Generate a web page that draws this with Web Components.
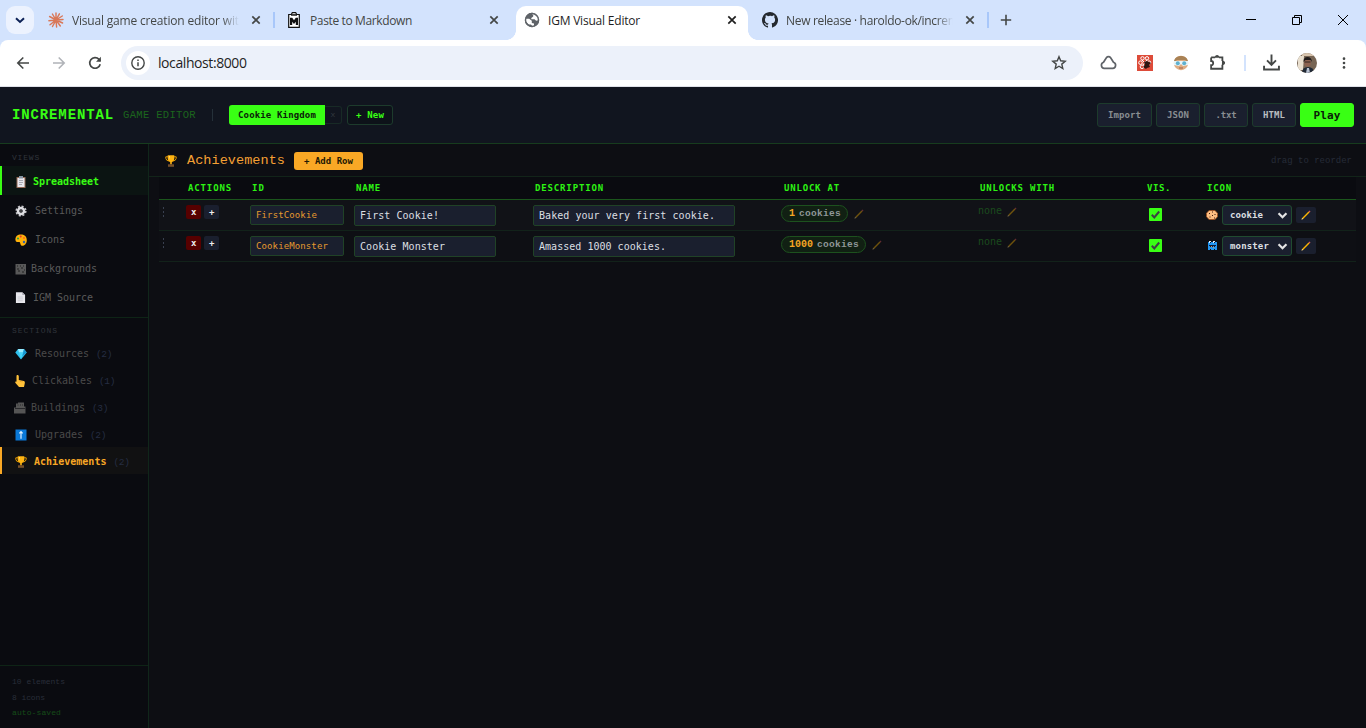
<!DOCTYPE html>
<html lang="en"><head><meta charset="utf-8"><title>IGM Visual Editor</title>
<style>html,body{margin:0;height:728px;overflow:hidden;background:#0d0e13}</style></head>
<body><app-window></app-window>
<script>
const ICONS = {
down:['0 0 16 16','<path d="M4 6.3 8 10l4-3.7" fill="none" stroke="#0b2055" stroke-width="2"/>'],
close:['0 0 16 16','<path d="m4.3 4.3 7.4 7.4m0-7.4-7.4 7.4" stroke="currentColor" stroke-width="1.7"/>'],
burst:['0 0 16 16','<g stroke="#d97757" stroke-width="1.45" stroke-linecap="round"><path d="M8 8V.9M8 8 11.4 1.8M8 8l6.3-4M8 8l7-.5M8 8l6.6 3M8 8l4.3 6M8 8l.6 7M8 8l-3.5 6.5M8 8l-6 4.7M8 8 .9 8.7M8 8 1.6 4.5M8 8 4.4 2"/></g>'],
paste:['0 0 16 16','<path d="M2.7 2.5h2.6l1-1.8h3.4l1 1.8h2.6v12.8H2.7z" fill="#fff" stroke="#111" stroke-width="1.2"/><path d="M5 2.2h6v1.5H5z" fill="#111"/><path d="M4 13V5.8h2.2L8 8.3l1.8-2.5H12V13H9.8V9.8L8 12 6.2 9.8V13z" fill="#111"/>'],
globe:['0 0 16 16','<circle cx="8" cy="8" r="7.2" fill="#5f6368"/><path d="M1.5 6.7h3.7l2.6 2v2.2l2.2.5v2.9l-1.5.3L7 12.5H4.7L1.2 9zM7 1.2 9.2 3v1.5L7.3 6v1.2h3.2l1.6 1.6 2.6-.6C14.5 4.5 12 1.5 8.6 1.1z" fill="#fff"/><circle cx="8" cy="8" r="6.5" fill="none" stroke="#5f6368" stroke-width="1.4"/>'],
github:['0 0 16 16','<path fill="#24292f" d="M8 0C3.58 0 0 3.58 0 8c0 3.54 2.29 6.53 5.47 7.59.4.07.55-.17.55-.38v-1.49c-2.01.37-2.53-.49-2.69-.94-.09-.23-.48-.94-.82-1.13-.28-.15-.68-.52-.01-.53.63-.01 1.08.58 1.23.82.72 1.21 1.87.87 2.33.66.07-.52.28-.87.51-1.07-1.78-.2-3.64-.89-3.64-3.95 0-.87.31-1.59.82-2.15-.08-.2-.36-1.02.08-2.12 0 0 .67-.21 2.2.82A7.7 7.7 0 0 1 8 3.86c.68 0 1.36.09 2 .27 1.53-1.04 2.2-.82 2.2-.82.44 1.1.16 1.92.08 2.12.51.56.82 1.27.82 2.15 0 3.07-1.87 3.75-3.65 3.95.29.25.54.73.54 1.48v2.2c0 .21.15.46.55.38A8 8 0 0 0 8 0z"/>'],
plus:['0 0 16 16','<path d="M8 2.8v10.4M2.8 8h10.4" stroke="#444746" stroke-width="1.6"/>'],
min:['0 0 16 16','<path d="M3 7.5h10" stroke="#000"/>'],
max:['0 0 16 16','<path d="M3.5 5.5h7v7h-7zM5.5 5.5v-2h7v7h-2" fill="none" stroke="#000"/>'],
wclose:['0 0 16 16','<path d="m3 3 10 10m0-10L3 13" stroke="#000"/>'],
back:['0 0 16 16','<path d="M14 8H3m5.3-5.5L2.8 8l5.5 5.5" fill="none" stroke="#444746" stroke-width="1.6"/>'],
fwd:['0 0 16 16','<path d="M2 8h11M7.7 2.5 13.2 8l-5.5 5.5" fill="none" stroke="#b0b3b8" stroke-width="1.6"/>'],
reload:['0 0 16 16','<path d="M13.2 9.2A5.3 5.3 0 1 1 12 4.4l1.3 1.5" fill="none" stroke="#444746" stroke-width="1.7"/><path d="M13.9 1.8v5H9z" fill="#444746"/>'],
info:['0 0 16 16','<circle cx="8" cy="8" r="6.2" fill="none" stroke="#444746" stroke-width="1.4"/><path d="M8 7.2v4M8 4.5V6" stroke="#444746" stroke-width="1.5"/>'],
star:['0 0 16 16','<path d="m8 1.7 1.7 4.1 4.5.4-3.4 2.9 1 4.4L8 11.2l-3.8 2.3 1-4.4-3.4-2.9 4.5-.4z" fill="none" stroke="#444746" stroke-width="1.4"/>'],
cloud:['0 0 16 16','<path d="M4 13.5A3 3 0 0 1 3.3 7.7L6 3.5a2.5 2.5 0 0 1 4 0l2.7 4.2a3 3 0 0 1-.7 5.8z" fill="none" stroke="#5f6368" stroke-width="1.6"/>'],
react:['0 0 16 16','<path d="M0 0h16v16H0z" fill="#dd4b39"/><g fill="none" stroke="#fff" stroke-width="1"><circle cx="5.5" cy="3.3" r="1.7"/><circle cx="10" cy="3.3" r="1.7"/><circle cx="3.5" cy="7.7" r="1.8"/><circle cx="12.2" cy="7.4" r="1.5"/><circle cx="5" cy="11.8" r="1.8"/><path d="m5 5 5 5m0-5-4 5"/></g><path d="m7 7 3-1 4 2-2 2 1 2-3 1-1 1-3-2 2-2z" fill="#2d1512"/>'],
face:['0 0 16 16','<circle cx="8" cy="8" r="7.2" fill="#dfad82"/><path d="M1 7C1-1 15-1 15 7l-3-2H4z" fill="#a98255"/><path d="M1 6h14v4l-5 1-2-2-2 2-5-1z" fill="#e8f5fa"/><circle cx="4.8" cy="8.2" r="2" fill="#5fb1cf"/><circle cx="11.2" cy="8.2" r="2" fill="#5fb1cf"/><path d="M6 13h4" stroke="#a35e46"/>'],
puzzle:['0 0 16 16','<path d="M2 3.2h3.8M9.4 3.2h3.2v3.4M12.600 10v3.9H2v-3.300c2.600 0 2.600-4 0-4V3.200" fill="none" stroke="#444746" stroke-width="1.7"/><path d="M5.300 3.600c0-3.700 4.600-3.700 4.600 0zM12.200 6c3.900 0 3.900 4.600 0 4.600z" fill="#444746"/>'],
download:['0 0 16 16','<path d="M8 .5v9.5M3.8 6 8 10.2 12.2 6M1 11v3.6h14V11" fill="none" stroke="#444746" stroke-width="1.8"/>'],
photo:['0 0 20 20','<defs><clipPath id="p"><circle cx="10" cy="10" r="10"/></clipPath></defs><g clip-path="url(#p)"><path d="M0 0h20v20H0z" fill="#776554"/><path d="M1 3h6l-1 14H1z" fill="#e9dfcf"/><path d="M5 0h12v3H5z" fill="#d8c4ad"/><path d="M5 20q0-6 6-6t6 6" fill="#202936"/><path d="m10 15 2 0 1 5h-4z" fill="#b9c2d2"/><ellipse cx="10.5" cy="9.4" rx="3.300" ry="4.300" fill="#8d6250"/><path d="M6.500 9q0-5 4-5T15 9l-1.500-2h-5z" fill="#211c1b"/><path d="M7.5 9h6" stroke="#332421"/></g>'],
dots:['0 0 16 16','<g fill="#444746"><circle cx="8" cy="3" r="1.5"/><circle cx="8" cy="8" r="1.5"/><circle cx="8" cy="13" r="1.5"/></g>'],
clip:['0 0 12 12','<path d="M1.5 1h9v11h-9z" fill="#916653"/><path d="M2.5 2h7v9h-7z" fill="#e9e8ed"/><path d="M4 0h4v2.5H4z" fill="#8795a2"/><path d="M4 4.5h4M4 6.5h4M4 8.5h3" stroke="#9a9aa5" stroke-width=".8"/>'],
gear:['0 0 12 12','<circle cx="6" cy="6" r="4.8" fill="none" stroke="#c4c4c8" stroke-width="1.6" stroke-dasharray="2.100 1.670"/><circle cx="6" cy="6" r="3" fill="none" stroke="#dedee2" stroke-width="2.5"/><circle cx="6" cy="6" r="1" fill="#555"/>'],
palette:['0 0 12 12','<path d="M6 .5C2 .5 0 3 .5 6.3c.3 2 2.2 1.800 3.500 1.700 1.600-.1 1 2.200 2 3.200 1.700 1.600 5.700-.6 5.800-4.800S9 .5 6 .5z" fill="#ffb10a"/><circle cx="3" cy="4.600" r="1" fill="#14a44d"/><circle cx="5.700" cy="2.600" r="1" fill="#e5382d"/><circle cx="9" cy="4" r="1" fill="#ff6d14"/><circle cx="9" cy="8" r="1.200" fill="#3163a8"/>'],
frame:['0 0 12 12','<path d="M.5 1h10.5v10.5H.5z" fill="#595959"/><path d="M2 3h1m2 0h1m2 0h1M2 6h2m2-1h2m1 2h1M3 8h2m2 1h2" stroke="#222" stroke-width="1"/>'],
page:['0 0 12 12','<path d="M1 .3h7l3 3V12H1z" fill="#e7e7ec"/><path d="M8 .3v3h3" fill="#a8a8b4"/><path d="M3 5.5h5.500m-5.500 2h5.500m-5.500 2h5.500" stroke="#b8b8c0" stroke-width=".6"/>'],
gem:['0 0 12 12','<path d="M3 1h6l2.7 3.5L6 11.5.3 4.5z" fill="#2fc0ec"/><path d="M3 1h6L7.7 4.5H4z" fill="#9aecff"/><path d="M4 4.5h4L6 11z" fill="#47d6fa"/><path d="m9 1 2.7 3.5L7.5 8z" fill="#1996d0"/>'],
hand:['0 0 12 12','<path d="M2.300 0c1.200 0 1.500.7 1.500 1.400V5l5 1c1 .4 1.200 1 1 2.200L9 12H4L.5 8c-.8-1.300.1-2 1-1.300V1.400C1.500.6 1.700 0 2.300 0z" fill="#ffc13a"/><path d="M5.400 5.500V7M7 5.800v1.400" stroke="#d98e1d" stroke-width=".6"/>'],
build:['0 0 12 12','<path d="M2 5.500V1.500h2V.5h6v4h1.500v7H0v-6z" fill="#555"/><path d="M3.500 3h1m1.500 0h1m1 0h1M1 6.500h10" stroke="#1e1e22" stroke-width=".8"/>'],
up:['0 0 12 12','<path d="M.5.5h11v11H.5z" fill="#0a78d6"/><path d="M6 9.7V3M4.3 4.3 6 2.6l1.7 1.7" fill="none" stroke="#dff1ff" stroke-width="1.2"/>'],
trophy:['0 0 12 12','<path d="M3 1.800H.8v1.500Q1 5.600 4 6M9 1.800h2.200v1.500Q11 5.600 8 6" fill="none" stroke="#e59b00" stroke-width="1"/><path d="M2.700 .3h6.600V4Q8.800 6.800 6.800 7.300V9.500H5.200V7.300Q3.200 6.800 2.700 4z" fill="#ffb412"/><path d="M4 1h1v4z" fill="#ffe07a"/><path d="M3 9.300h6v2.500H3z" fill="#75502b"/>'],
pencil:['0 0 12 12','<path d="m1.500 10.500.6-1.600 6.400-6.400 1 1-6.400 6.400z" fill="#fbb400"/><path d="m1.500 10.500.6-1.600 1 1z" fill="#ddd"/><path d="m8.500 2.500 1-1 1 1-1 1z" fill="#e25563"/>'],
check:['0 0 13 13','<rect width="13" height="13" rx="1" fill="#39ff14"/><path d="m2.800 6.800 2.500 2.600L10.200 3.500" fill="none" stroke="#3c4043" stroke-width="2"/>'],
cookie:['0 0 12 12','<path d="M3 1.5h6l2.5 2.7v3.5L9 10.500H3L.5 7.700V4.200z" fill="#fdbd82" stroke="#a34b16" stroke-width=".7"/><path d="M3 4h1v1H3zM6 2.500h1v1H6zM8.500 5h1v1h-1zM6 6h1v1H6zM3.500 7.500h1v1h-1zM8 8.500h1v1H8z" fill="#3f1b10"/>'],
monster:['0 0 12 12','<path d="M2 2h9v8H9V9H8v1H5V9H4v1H2z" fill="#2196f3"/><path d="M3 1h2v2H3zM7 1h2v2H7z" fill="#dceeff"/><path d="M4 2h1v1H4zM8 2h1v1H8zM3 5h7v1H3zM4 6h1v1H4zM6 6h1v1H6zM8 6h1v1H8z" fill="#111b35"/><path d="M5 6h1v1H5zM7 7h1v1H7z" fill="#d99b52"/>'],
chev:['0 0 10 10','<path d="M1.4 3 5 6.6 8.6 3" fill="none" stroke="#e4e4e4" stroke-width="2"/>']
};
const mono = '"DejaVu Sans Mono",monospace', slab = '"Liberation Mono","Courier New",monospace';
function define(name, css, html, after){
  customElements.define(name, class extends HTMLElement{
    connectedCallback(){
      if(this.shadowRoot) return;
      const r=this.attachShadow({mode:'open'});
      r.innerHTML='<style>*{box-sizing:border-box}:host{box-sizing:border-box}'+css+'</style>'+(typeof html==='function'?html(this):html);
      if(after) after(this,r);
    }});
}
const T=(s,w,size,color,extra='')=>`<ui-text w="${w}" style="font-size:${size}px;color:${color};${extra}">${s}</ui-text>`;
const I=(n,s,extra='')=>`<ui-icon name="${n}" size="${s}" style="${extra}"></ui-icon>`;

define('ui-icon',':host{display:block;flex:none}svg{display:block}',e=>{const [v,b]=ICONS[e.getAttribute('name')],s=e.getAttribute('size');return `<svg width="${s}" height="${s}" viewBox="${v}">${b}</svg>`});

define('app-window',':host{display:flex;flex-direction:column;width:1366px;height:728px;overflow:hidden}main{display:flex;flex:1;min-height:0}',
 `<tab-strip></tab-strip><nav-toolbar></nav-toolbar><editor-header></editor-header><main><side-bar></side-bar><sheet-view></sheet-view></main>`);

define('browser-tab',`:host{display:flex;align-items:center;width:232px;height:34px;flex:none;margin-right:6px;padding:0 8px;position:relative;color:#444746;font:12px "Open Sans",sans-serif}
:host([active]){background:#fff;border-radius:10px 10px 0 0;color:#1f1f1f}
:host([active])::before,:host([active])::after{content:"";position:absolute;bottom:0;width:10px;height:10px}
:host([active])::before{left:-10px;background:radial-gradient(circle at 0 0,#d3e3fd 9.6px,#fff 10.2px)}:host([active])::after{right:-10px;background:radial-gradient(circle at 100% 0,#d3e3fd 9.6px,#fff 10.2px)}
:host([sep]) i{position:absolute;right:-3px;top:6px;width:2px;height:16px;background:#a8c7fa}
.l{width:168px;margin:0 8px;overflow:hidden;padding-bottom:4px;height:28px;display:flex;align-items:center}.f{-webkit-mask:linear-gradient(90deg,#000 150px,transparent 167px)}ui-icon{margin-bottom:6px}`,
 e=>`${I(e.getAttribute('icon'),16)}<div class="l ${e.hasAttribute('fade')?'f':''}"><slot></slot></div>${I('close',16)}<i></i>`);

define('tab-strip',`:host{display:flex;height:40px;background:#d3e3fd;padding-top:6px;flex:none}.s{width:28px;height:28px;border-radius:9px;background:#ecf2fe;margin:0 6px;padding:6px;flex:none}.w{display:flex;margin-left:auto;gap:30px;padding:6px 15px 0 0}.p{margin:6px 0 0 6px}`,
`<div class="s">${I('down',16)}</div>
<browser-tab icon="burst" sep fade>${T('Visual game creation editor with',174,12,'inherit')}</browser-tab>
<browser-tab icon="paste">${T('Paste to Markdown',102,12,'inherit')}</browser-tab>
<browser-tab icon="globe" active>${T('IGM Visual Editor',92,12,'inherit')}</browser-tab>
<browser-tab icon="github" sep fade>${T('New release · haroldo-ok/increment',190,12,'inherit')}</browser-tab>
<div class="p">${I('plus',16)}</div><div class="w">${I('min',16)}${I('max',16)}${I('wclose',16)}</div>`);

define('nav-toolbar',`:host{display:block;height:47px;flex:none;background:#d3e3fd}.b{height:47px;background:#fff;border-radius:8px 8px 0 0;border-bottom:1px solid #dfe1e8;display:flex;align-items:center;padding:0 15px 1px}
.o{display:flex;align-items:center;width:962px;height:34px;border-radius:17px;background:#ecf1fa;margin-left:18px;padding:0 16px 0 5px;font-family:"Open Sans",sans-serif}.i{width:24px;height:24px;border-radius:50%;background:#fff;padding:4px;margin-right:8px}.v{width:2px;height:16px;background:#d3e3fd;margin:0 17px 0 18px}`,
`<div class="b">${I('back',16)}${I('fwd',16,'margin-left:20px')}${I('reload',16,'margin-left:20px')}
<div class="o"><div class="i">${I('info',16)}</div>${T('localhost:8000',88.5,14,'#1f1f1f','flex:1;padding-top:2px')}${I('star',16)}</div>
${I('cloud',17,'margin-left:17px')}${I('react',16,'margin-left:20px')}${I('face',16,'margin-left:20px')}${I('puzzle',17,'margin-left:20px')}<div class="v"></div>${I('download',17)}${I('photo',20,'margin-left:17px')}${I('dots',14,'margin-left:20px')}</div>`);

define('game-button',`:host{display:flex;align-items:center;justify-content:center;flex:none;height:24px;border:1px solid #1d3b2c;border-radius:3px;background:#1a1f2e;font-weight:bold}`,'<slot></slot>');

define('editor-header',`:host{display:flex;align-items:center;height:57px;flex:none;background:#11151f;border-bottom:1px solid #173c1e;padding:0 12px;font-family:${slab}}
.d{width:1px;height:12px;background:#253039;margin:0 16px}.k{background:#39ff14;border-radius:3px 0 0 3px;width:96px;height:20px;display:grid;place-items:center;font-family:${mono};font-weight:bold}
.x{width:17px;height:18px;border:1px solid #182a26;border-left:0;border-radius:0 3px 3px 0;display:grid;place-items:center;margin-right:5px}.g{display:flex;gap:4px;margin-left:auto}game-button{font-family:${mono}}`,
`${T('INCREMENTAL',102,14,'#39ff14','font-weight:bold;margin-right:9px;padding-top:1px')}${T('GAME EDITOR',73,10.5,'#1c651d','padding-top:1px')}<div class="d"></div>
<div class="k">${T('Cookie Kingdom',78,9,'#0a2108')}</div><div class="x">${T('x',5,8,'#333a40')}</div>
<game-button style="width:46px;height:20px;background:#0d1219">${T('+ New',28,9,'#39ff14')}</game-button>
<div class="g"><game-button style="width:55px">${T('Import',33,9,'#888d91')}</game-button><game-button style="width:44px">${T('JSON',22,9,'#888d91')}</game-button><game-button style="width:44px">${T('.txt',21,9,'#888d91')}</game-button><game-button style="width:44px">${T('HTML',22,9,'#b9bdc0')}</game-button><game-button style="width:54px;background:#39ff14;border-color:#39ff14">${T('Play',27,11,'#0a1d08','padding-top:1px')}</game-button></div>`);

define('side-item',`:host{display:flex;align-items:center;height:29px;padding:2px 0 0 13px;border-left:2px solid transparent;font-family:${mono};color:#5a5a5a}
:host([small]){height:27px;color:#4a4a4a}:host([active]){background:#0b1412;border-color:#39ff14;color:#39ff14;font-weight:bold}:host([active][small]){background:#111112;border-color:#f9a825;color:#f9a825}
.n{font-weight:normal;margin:2px 0 0 7px;font-family:${slab}}`,
 e=>{const a=n=>e.getAttribute(n);return `${I(a('icon'),a('s')||12)}${T(a('label'),a('w'),10,'inherit',`margin-left:${a('gap')}px`)}${a('n')?`<div class="n">${T('('+a('n')+')',16,9.5,'#252d42')}</div>`:''}`});

define('side-bar',`:host{display:flex;flex-direction:column;width:149px;flex:none;border-right:1px solid #10261a;background:#0a0b10;font-family:${slab}}.h{height:22px;padding:9px 0 0 12px}.l{height:1px;background:#0e2416;margin-top:6px}.f{margin-top:auto;height:63px;border-top:1px solid #0e2416;padding:11px 12px 0;display:grid;grid-template-rows:16px 15px 15px}`,
`<div class="h">${T('VIEWS',28,8,'#30343b')}</div>
<side-item active icon="clip" label="Spreadsheet" w="66" gap="6"></side-item><side-item icon="gear" label="Settings" w="48" gap="8"></side-item><side-item icon="palette" label="Icons" w="30" gap="8"></side-item><side-item icon="frame" label="Backgrounds" w="66" gap="4"></side-item><side-item icon="page" s="11" label="IGM Source" w="60" gap="7"></side-item>
<div class="l"></div><div class="h" style="height:21px;padding-top:8px">${T('SECTIONS',46,8,'#30343b')}</div>
<side-item small icon="gem" label="Resources" w="54" gap="8" n="2"></side-item><side-item small icon="hand" label="Clickables" w="60" gap="5" n="1"></side-item><side-item small icon="build" label="Buildings" w="54" gap="5" n="3" style="padding-left:12px"></side-item><side-item small icon="up" label="Upgrades" w="48" gap="8" n="2"></side-item><side-item small active icon="trophy" label="Achievements" w="72.500" gap="7" n="2"></side-item>
<div class="f">${T('10 elements',53,8,'#292e39')}${T('8 icons',33,8,'#292e39')}${T('auto-saved',49,8,'#154c18')}</div>`);

define('sheet-row',`:host{display:grid;grid-template-columns:27px 64px 104px 179px 248px 197px 163px 65px 1fr;height:31px;border-bottom:1px solid #12221a;background:#111217;font-family:${mono}}
:host([even]){background:#0e0f14}
.c{display:flex;align-items:flex-start;padding-top:5px}
.h{display:grid;gap:2px;padding:2px 0 0 4px}.h i{width:1px;height:2px;background:#394050}
.b{width:15px;height:14px;border-radius:2px;background:#1a1f2e;display:grid;place-items:center;margin-right:3px;font-weight:bold}.r{background:#560000}
.in{height:21px;border:1px solid #204226;border-radius:2px;background:#1a1f2e;display:flex;align-items:center;padding-left:5px}
.p{height:17px;border:1px solid #1d511e;border-radius:9px;background:#112013;display:flex;align-items:center;gap:4px;padding-left:7px;font:bold 10px ${slab}}
.s{width:70px;height:20px;border:1px solid #204b30;border-radius:3px;background:#1a1f2e;display:flex;align-items:center;justify-content:space-between;padding:0 3px 0 7px;font-weight:bold;margin:0 4px}
.e{width:20px;height:16px;border-radius:2px;background:#1a1f2e;display:grid;place-items:center;margin-top:2px}`,
 e=>{const [id,idw,name,nw,desc,dw,n,nnw,pw,icon,iw]=JSON.parse(e.getAttribute('data'));const D='#dcdfe2';return `
<div class="c"><div class="h"><i></i><i></i><i></i></div></div>
<div class="c"><div class="b r">${T('x',5,9,'#eee')}</div><div class="b">${T('+',5,9,'#eee')}</div></div>
<div class="c"><div class="in" style="width:94px;height:20px">${T(id,idw,9,'#e59a2e')}</div></div>
<div class="c"><div class="in" style="width:142px">${T(name,nw,10,D,'padding-top:1px')}</div></div>
<div class="c"><div class="in" style="width:202px">${T(desc,dw,10,D,'padding-top:1px')}</div></div>
<div class="c"><div class="p" style="width:${pw}px">${T(n,nnw,10,'#f5a623')}${T('cookies',42,9.5,'#8f9797')}</div>${I('pencil',12,'opacity:.4;margin:3px 0 0 5px')}</div>
<div class="c" style="font-family:${slab};font-style:italic">${T('none',24,10,'#1b4a1d')}${I('pencil',12,'opacity:.4;margin:1px 0 0 4px')}</div>
<div class="c" style="padding:8px 0 0 8px">${I('check',13)}</div>
<div class="c">${I(icon,12,'margin:4px 0 0 0')}<div class="s">${T(icon,iw,9,D)}${I('chev',11)}</div><div class="e">${I('pencil',12)}</div></div>`});

define('sheet-view',`:host{display:flex;flex-direction:column;flex:1;background:#0d0e13;font-family:${slab}}
.t{display:flex;align-items:center;height:33px;border-bottom:1px solid #122419;padding:2px 14px 0 16px;flex:none}.a{width:69px;height:18px;border-radius:3px;background:#f9a825;display:grid;place-items:center;font:bold 9px ${mono};margin:0 auto 0 9px}
.w{margin:0 10px}.h{display:grid;grid-template-columns:29px 64px 104px 179px 249px 196px 167px 60px 1fr;align-items:center;height:23px;background:#0a0b10;border-bottom:1px solid #1b561c;font:bold 9px ${mono}}`,
`<div class="t">${I('trophy',12)}${T('Achievements',98,13.5,'#f5a033','margin:1px 0 0 10px')}<div class="a">${T('+ Add Row',49,9,'#241803')}</div>${T('drag to reorder',81,9,'#262c38')}</div>
<div class="w"><div class="h"><span></span>${[['ACTIONS',44],['ID',13],['NAME',25],['DESCRIPTION',69],['UNLOCK AT',56],['UNLOCKS WITH',75],['VIS.',24],['ICON',25]].map(([t,w])=>T(t,w,9,'#2df313')).join('')}</div>
<sheet-row data='["FirstCookie",61,"First Cookie!",79,"Baked your very first cookie.",176,"1",6,67,"cookie",33]'></sheet-row>
<sheet-row even data='["CookieMonster",72,"Cookie Monster",85,"Amassed 1000 cookies.",127,"1000",24,85,"monster",39]'></sheet-row></div>`);

/* Text label whose tracking is adjusted so that it spans the width given in "w". */
define('ui-text',':host{display:block;white-space:nowrap;line-height:1.2;flex:none}span{display:inline-block}','<span><slot></slot></span>',(e,r)=>{
 const s=r.querySelector('span'),w=+e.getAttribute('w'),n=e.textContent.length;
 const nat=s.getBoundingClientRect().width;
 s.style.letterSpacing=((w-nat)/n).toFixed(3)+'px';
});
</script></body></html>
